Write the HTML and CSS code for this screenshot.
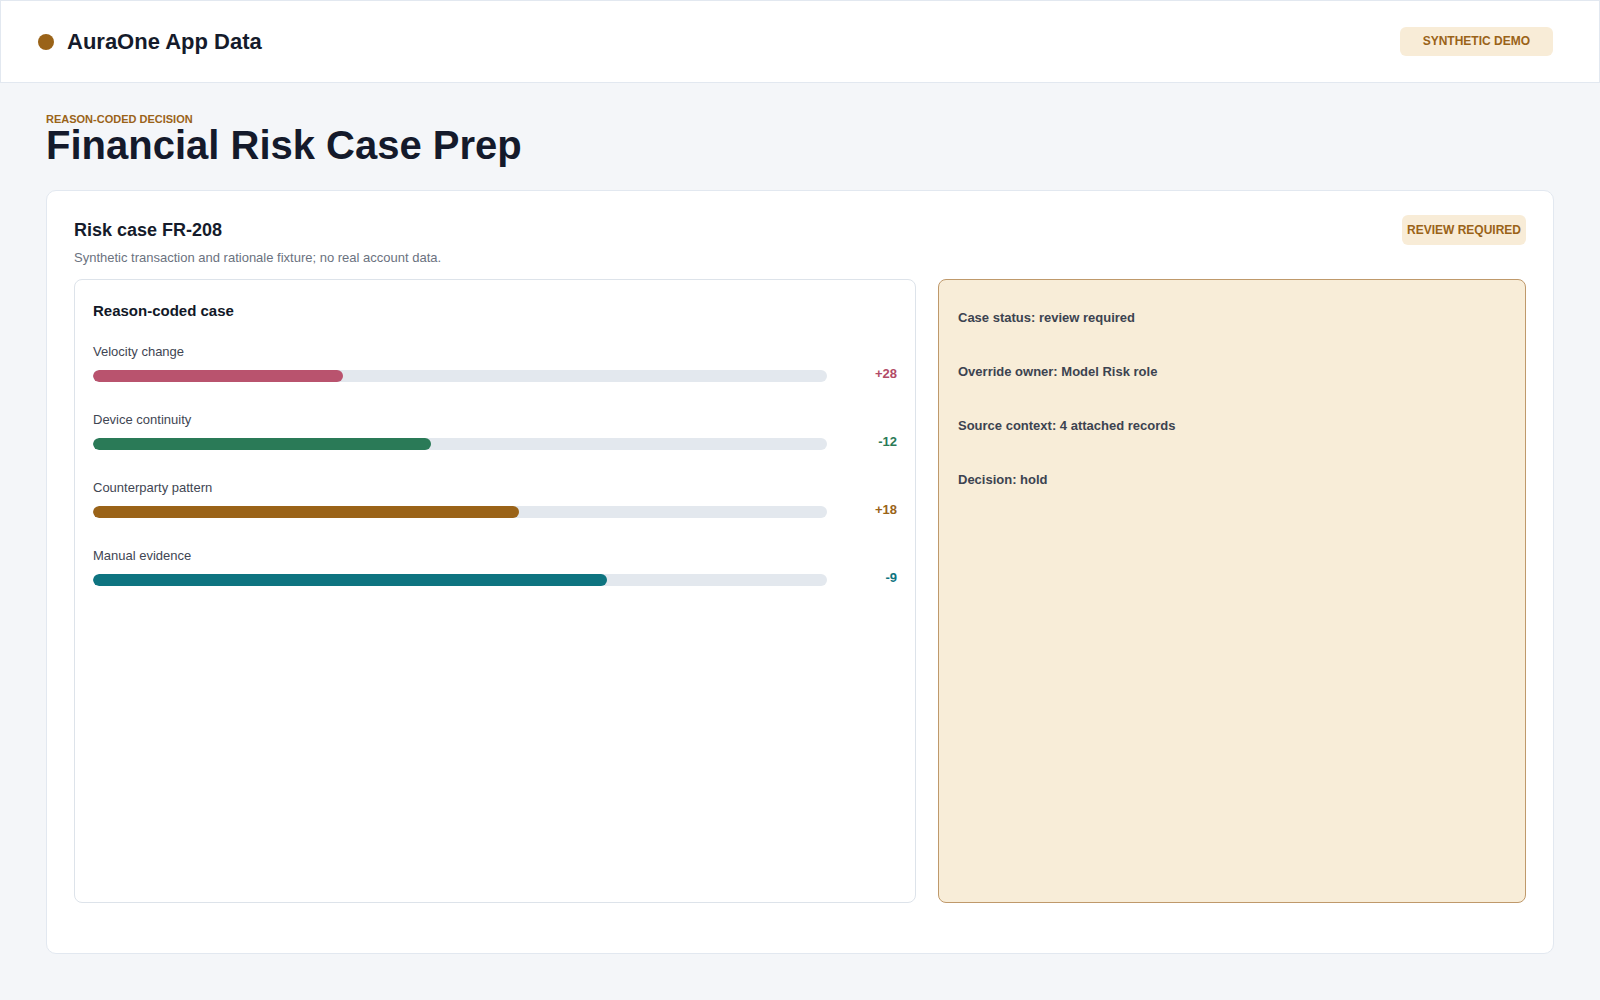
FILE: index.html
```html
<!DOCTYPE html>
<html lang="en">
<head>
  <meta charset="UTF-8">
  <meta name="viewport" content="width=device-width, initial-scale=1">
  <title>AuraOne App Data</title>
  <link rel="stylesheet" href="styles.css">
</head>
<body>
  <header class="topbar">
    <div class="brand">
      <span class="brand-dot"></span>
      <span class="brand-name">AuraOne App Data</span>
    </div>
    <span class="demo-badge">Synthetic demo</span>
  </header>

  <main class="page">
    <div class="eyebrow">Reason-coded decision</div>
    <h1>Financial Risk Case Prep</h1>

    <section class="case-card">
      <div class="case-head">
        <h2>Risk case FR-208</h2>
        <span class="review-badge">Review required</span>
      </div>
      <p class="case-sub">Synthetic transaction and rationale fixture; no real account data.</p>

      <div class="case-grid">
        <div class="reasons">
          <h3>Reason-coded case</h3>

          <div class="reason">
            <div class="reason-label">Velocity change</div>
            <div class="reason-row">
              <div class="track"><div class="fill rose" style="width: 34%"></div></div>
              <span class="score rose-text">+28</span>
            </div>
          </div>

          <div class="reason">
            <div class="reason-label">Device continuity</div>
            <div class="reason-row">
              <div class="track"><div class="fill green" style="width: 46%"></div></div>
              <span class="score green-text">-12</span>
            </div>
          </div>

          <div class="reason">
            <div class="reason-label">Counterparty pattern</div>
            <div class="reason-row">
              <div class="track"><div class="fill amber" style="width: 58%"></div></div>
              <span class="score amber-text">+18</span>
            </div>
          </div>

          <div class="reason">
            <div class="reason-label">Manual evidence</div>
            <div class="reason-row">
              <div class="track"><div class="fill teal" style="width: 70%"></div></div>
              <span class="score teal-text">-9</span>
            </div>
          </div>
        </div>

        <div class="status">
          <div class="status-item">Case status: review required</div>
          <div class="status-item">Override owner: Model Risk role</div>
          <div class="status-item">Source context: 4 attached records</div>
          <div class="status-item">Decision: hold</div>
        </div>
      </div>
    </section>
  </main>
</body>
</html>
```

FILE: styles.css
```css
* {
  box-sizing: border-box;
}
body {
  font-family: 'Liberation Sans', Arial, sans-serif;
  margin: 0;
  padding: 0;
  background: #f4f6f9;
  color: #151b2b;
}
.topbar {
  height: 83px;
  background: white;
  border: 1px solid #e2e8f0;
  display: flex;
  justify-content: space-between;
  align-items: center;
  padding: 0 46px 0 37px;
}
.brand {
  display: flex;
  align-items: center;
}
.brand-dot {
  width: 16px;
  height: 16px;
  border-radius: 50%;
  background: #9a6318;
  margin-right: 13px;
}
.brand-name {
  font-size: 22px;
  font-weight: bold;
  color: #151b2b;
}
.demo-badge {
  background: #f8ecd7;
  color: #9a6318;
  font-size: 12px;
  font-weight: bold;
  text-transform: uppercase;
  line-height: 15px;
  padding: 7px 23px;
  border-radius: 6px;
}
.page {
  padding: 30px 46px 0;
}
.eyebrow {
  font-size: 11px;
  line-height: 13px;
  font-weight: bold;
  text-transform: uppercase;
  color: #9a6318;
}
h1 {
  font-size: 40px;
  line-height: 38px;
  margin: 0 0 26px;
  color: #141a2b;
}
.case-card {
  background: white;
  border: 1px solid #e2e8f0;
  border-radius: 10px;
  padding: 24px 27px 50px;
}
.case-head {
  display: flex;
  justify-content: space-between;
  align-items: center;
}
.case-head h2 {
  font-size: 18px;
  margin: 1px 0 0;
  color: #151b2b;
}
.review-badge {
  background: #f8ecd7;
  color: #9a6318;
  font-size: 12px;
  font-weight: bold;
  text-transform: uppercase;
  line-height: 14px;
  padding: 8px 5px;
  border-radius: 6px;
}
.case-sub {
  font-size: 13px;
  line-height: 16px;
  color: #6b7280;
  margin: 5px 0 13px;
}
.case-grid {
  display: grid;
  grid-template-columns: 842fr 588fr;
  gap: 22px;
}
.reasons {
  height: 624px;
  border: 1px solid #dde3ea;
  border-radius: 8px;
  padding: 21px 18px;
}
.reasons h3 {
  font-size: 15px;
  line-height: 20px;
  margin: 0 0 23px;
  color: #111827;
}
.reason {
  margin-bottom: 28px;
}
.reason-label {
  font-size: 13px;
  line-height: 16px;
  color: #3f4653;
  margin-bottom: 8px;
}
.reason-row {
  display: grid;
  grid-template-columns: 1fr 70px;
  align-items: center;
}
.track {
  height: 12px;
  border-radius: 6px;
  background: #e3e8ee;
  overflow: hidden;
}
.fill {
  height: 100%;
  border-radius: 6px;
}
.score {
  font-size: 13px;
  line-height: 16px;
  font-weight: bold;
  text-align: right;
  margin: -2px 0 2px;
}
.rose { background: #b9536e; }
.green { background: #2a7a57; }
.amber { background: #9a6318; }
.teal { background: #0e7480; }
.rose-text { color: #b24a66; }
.green-text { color: #2a7a57; }
.amber-text { color: #9a6318; }
.teal-text { color: #0e7480; }
.status {
  height: 624px;
  background: #f8edd8;
  border: 1px solid #bf996b;
  border-radius: 8px;
  padding: 21px 19px;
}
.status-item {
  font-size: 13px;
  line-height: 16px;
  font-weight: bold;
  color: #3c4350;
  padding: 9px 0;
  margin-bottom: 20px;
}
```
